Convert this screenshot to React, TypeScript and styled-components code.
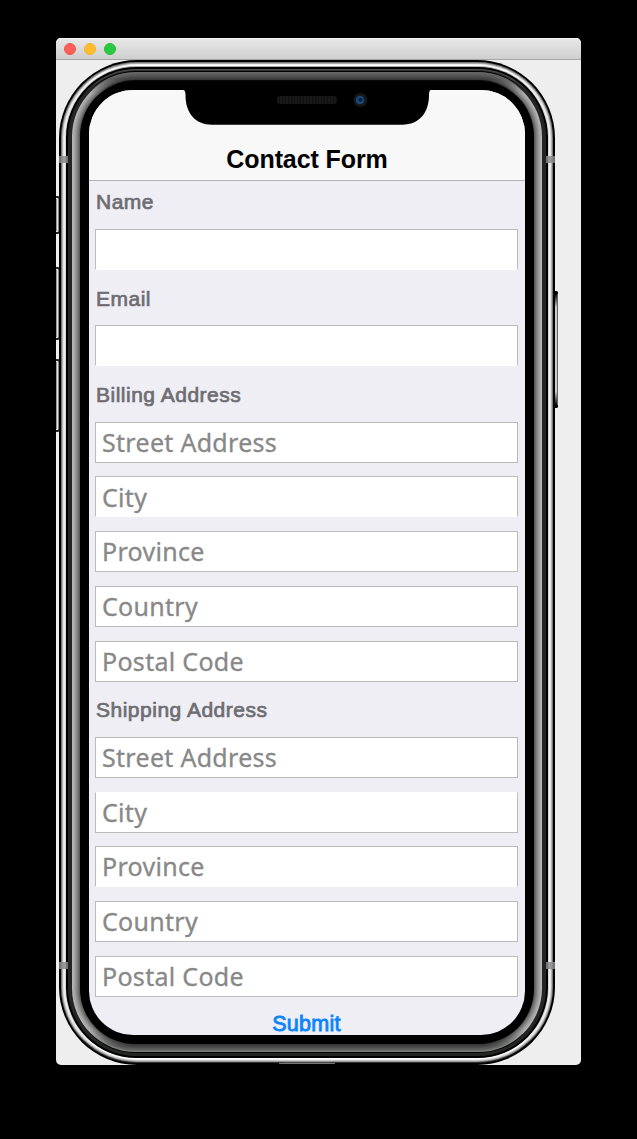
import React from "react";
import styled, { createGlobalStyle } from "styled-components";

const GlobalStyle = createGlobalStyle`
  * { box-sizing: border-box; }
  html, body { margin: 0; background: #000; }
  body { font-family: "Liberation Sans", Arial, sans-serif; overflow: hidden; }
`;

const Desktop = styled.div`
  display: flex;
  justify-content: flex-start;
  width: 637px;
  height: 1139px;
  padding: 38px 56px 74px;
  background: #000;
`;

const Window = styled.main`
  display: flex;
  flex-direction: column;
  width: 525px;
  height: 1027px;
  border-radius: 5px;
  overflow: hidden;
  background: #eee;
`;

const TitleBar = styled.header`
  display: flex;
  align-items: center;
  gap: 8px;
  flex: none;
  height: 22px;
  padding-left: 8px;
  background: linear-gradient(#e8e8e8, #cfcfcf);
  border-bottom: 1px solid #a6a6a6;
  box-shadow: inset 0 1px 0 #f4f4f4;
`;

const Light = styled.span<{ $fill: string; $ring: string }>`
  width: 12px;
  height: 12px;
  border-radius: 50%;
  background: ${(p) => p.$fill};
  border: 1px solid ${(p) => p.$ring};
`;

const Device = styled.section`
  position: relative;
  flex: none;
  height: 1005px;
  padding: 30px 56px 30px 33px;
`;

const Shell = styled.svg`
  position: absolute;
  inset: 0;
`;

const Screen = styled.div`
  position: relative;
  display: flex;
  flex-direction: column;
  width: 436px;
  height: 945px;
  border-radius: 44px;
  overflow: hidden;
  background: #efeef4;
`;

const Notch = styled.svg`
  position: absolute;
  top: 0;
  left: 94px;
`;

const NavBar = styled.div`
  display: flex;
  align-items: flex-end;
  justify-content: center;
  flex: none;
  height: 91px;
  padding-bottom: 7px;
  background: #f8f8f8;
  border-bottom: 1px solid #b2b2b2;
`;

const Title = styled.h1`
  margin: 0;
  font-size: 25px;
  line-height: 28px;
  font-weight: 700;
  letter-spacing: -0.1px;
  color: #000;
`;

const Form = styled.form`
  display: flex;
  flex-direction: column;
  padding: 0 7px 0 6px;
`;

const Label = styled.div<{ $height: number; $lift: number }>`
  display: flex;
  align-items: flex-end;
  height: ${(p) => p.$height}px;
  padding: 0 0 ${(p) => p.$lift}px 1px;
  font-size: 21px;
  line-height: 24px;
  color: #6d6d72;
  -webkit-text-stroke: 0.7px #6d6d72;
  letter-spacing: 0.5px;
`;

const Field = styled.div<{ $gap: number; $open?: "top" | "bottom"; $drop: number }>`
  display: flex;
  align-items: center;
  height: 41px;
  margin-top: ${(p) => p.$gap}px;
  padding: ${(p) => p.$drop}px 6px ${(p) => 2 - p.$drop}px;
  background: #fff;
  border: 1px solid #bbb;
  ${(p) => p.$open && `border-${p.$open}-color: #fff;`}
  font-family: "Noto Sans", "Open Sans", sans-serif;
  font-size: 25px;
  line-height: 34px;
  letter-spacing: 0.3px;
  color: #888;
  -webkit-text-stroke: 0.3px #888;
`;

const Submit = styled.div`
  display: flex;
  justify-content: center;
  margin-top: 15px;
  font-size: 21.5px;
  line-height: 24px;
  letter-spacing: 0.3px;
  color: #0a84ff;
  -webkit-text-stroke: 0.85px #0a84ff;
`;

type FieldSpec = { text: string; gap: number; open?: "top" | "bottom"; drop?: number };

const sections: { label: string; height: number; lift?: number; fields: FieldSpec[] }[] = [
  { label: "Name", height: 48, fields: [{ text: "", gap: 0, open: "bottom" }] },
  { label: "Email", height: 55, lift: 14, fields: [{ text: "", gap: 0, open: "bottom" }] },
  {
    label: "Billing Address",
    height: 56,
    fields: [
      { text: "Street Address", gap: 0 },
      { text: "City", gap: 13, open: "bottom", drop: 1 },
      { text: "Province", gap: 14 },
      { text: "Country", gap: 14 },
      { text: "Postal Code", gap: 14 },
    ],
  },
  {
    label: "Shipping Address",
    height: 55,
    fields: [
      { text: "Street Address", gap: 0 },
      { text: "City", gap: 14, open: "top" },
      { text: "Province", gap: 13, open: "bottom" },
      { text: "Country", gap: 14 },
      { text: "Postal Code", gap: 14 },
    ],
  },
];

// One-pixel shells of the metal band and glass edge: top, side and bottom tone.
const shells: [string, string, string][] = [
  ["#000", "#000", "#000"],
  ["#000", "#000", "#000"],
  ["#777", "#777", "#333"],
  ["#aaa", "#b4b4b4", "#999"],
  ["#eee", "#e4e4e4", "#c8c8c8"],
  ["#fff", "#f4f0f0", "#f4f4f4"],
  ["#aaa", "#d6d4d4", "#fff"],
  ["#000", "#000", "#000"],
  ["#000", "#000", "#000"],
  ["#4a4a4a", "#242424", "#242624"],
  ["#333", "#242424", "#242624"],
  ["#000", "#242424", "#242624"],
  ["#666", "#242424", "#000"],
  ["#626262", "#b4b4b4", "#7c7f7c"],
  ["#5c5c5c", "#adadad", "#6c6e6c"],
  ["#565656", "#a2a2a2", "#606060"],
  ["#4f4f4f", "#979797", "#585858"],
  ["#484848", "#8b8b8b", "#4e4e4e"],
  ["#414141", "#7c7c7c", "#464646"],
  ["#383838", "#6c6c6c", "#3c3c3c"],
  ["#000", "#5a5a5a", "#343434"],
  ["#000", "#000", "#000"],
];

const sideButtons = [
  { y: 137, h: 36 },
  { y: 208, h: 71 },
  { y: 300, h: 71 },
];

function PhoneShell() {
  return (
    <Shell width="525" height="1005" viewBox="0 0 525 1005">
      <defs>
        {shells.map(([top, side, bottom], i) => (
          <linearGradient key={i} id={`shell${i}`} gradientUnits="userSpaceOnUse" x1="0" x2="0" y1="0" y2="1005">
            <stop offset="0.019" stopColor={top} />
            <stop offset="0.034" stopColor={side} />
            <stop offset="0.966" stopColor={side} />
            <stop offset="0.981" stopColor={bottom} />
          </linearGradient>
        ))}
        <linearGradient id="key" x1="0" x2="0" y1="0" y2="1">
          <stop offset="0" stopColor="#000" />
          <stop offset="0.12" stopColor="#ccc" />
          <stop offset="0.88" stopColor="#ccc" />
          <stop offset="1" stopColor="#000" />
        </linearGradient>
      </defs>
      {sideButtons.map((b) => (
        <g key={b.y}>
          <rect x="-4" y={b.y} width="7.5" height={b.h} rx="2" fill="#e6e6e6" stroke="#222" strokeWidth="2" />
          <path d={`M0.5 ${b.y + 2}v${b.h - 4}`} stroke="#999" />
        </g>
      ))}
      <rect x="496" y="231" width="6" height="117" rx="1.5" fill="#000" />
      <rect x="498" y="234" width="4" height="111" fill="#666" />
      <rect x="499" y="234" width="2" height="111" fill="url(#key)" />
      {shells.map((_, i) => (
        <rect
          key={i}
          x={3 + i}
          y={i}
          width={496 - 2 * i}
          height={1005 - 2 * i}
          rx={78 - i * 1.1}
          fill={`url(#shell${i})`}
        />
      ))}
      {[96, 902].map((y) => (
        <g key={y} fill="#8a8a8c" opacity="0.85">
          <rect x="3" y={y} width="9" height="7" />
          <rect x="490" y={y} width="9" height="7" />
        </g>
      ))}
      <path d="M223 1003.5h56" stroke="#777" />
      <path d="M226 1002.5h50" stroke="#444" />
    </Shell>
  );
}

function ScreenNotch() {
  return (
    <Notch width="248" height="36" viewBox="0 0 248 36">
      <defs>
        <pattern id="mesh" width="3" height="3" patternUnits="userSpaceOnUse">
          <rect width="3" height="3" fill="#181818" />
          <rect width="1" height="3" fill="#111" />
        </pattern>
      </defs>
      <path d="M0 0Q2.5 0 2.5 5C2.5 23 12 34.7 29 34.7H219C237 34.7 246 22 246 5Q246 0 248 0Z" fill="#000" />
      <rect x="94" y="6" width="60" height="8" rx="3" fill="url(#mesh)" />
      <circle cx="177.5" cy="10" r="7" fill="#161616" />
      <circle cx="177" cy="10" r="4.3" fill="#17497a" />
      <circle cx="177.5" cy="9.8" r="2" fill="#091c38" />
    </Notch>
  );
}

export default function App() {
  return (
    <>
      <GlobalStyle />
      <Desktop>
        <Window>
          <TitleBar>
            <Light $fill="#ff5f57" $ring="#f0544c" />
            <Light $fill="#ffbd2e" $ring="#f0b028" />
            <Light $fill="#28ca41" $ring="#20bd38" />
          </TitleBar>
          <Device>
            <PhoneShell />
            <Screen>
              <NavBar>
                <Title>Contact Form</Title>
              </NavBar>
              <ScreenNotch />
              <Form>
                {sections.map((s) => (
                  <React.Fragment key={s.label}>
                    <Label $height={s.height} $lift={s.lift ?? 15}>
                      {s.label}
                    </Label>
                    {s.fields.map((f, i) => (
                      <Field key={i} $gap={f.gap} $open={f.open} $drop={f.drop ?? 0}>
                        {f.text}
                      </Field>
                    ))}
                  </React.Fragment>
                ))}
                <Submit>Submit</Submit>
              </Form>
            </Screen>
          </Device>
        </Window>
      </Desktop>
    </>
  );
}
